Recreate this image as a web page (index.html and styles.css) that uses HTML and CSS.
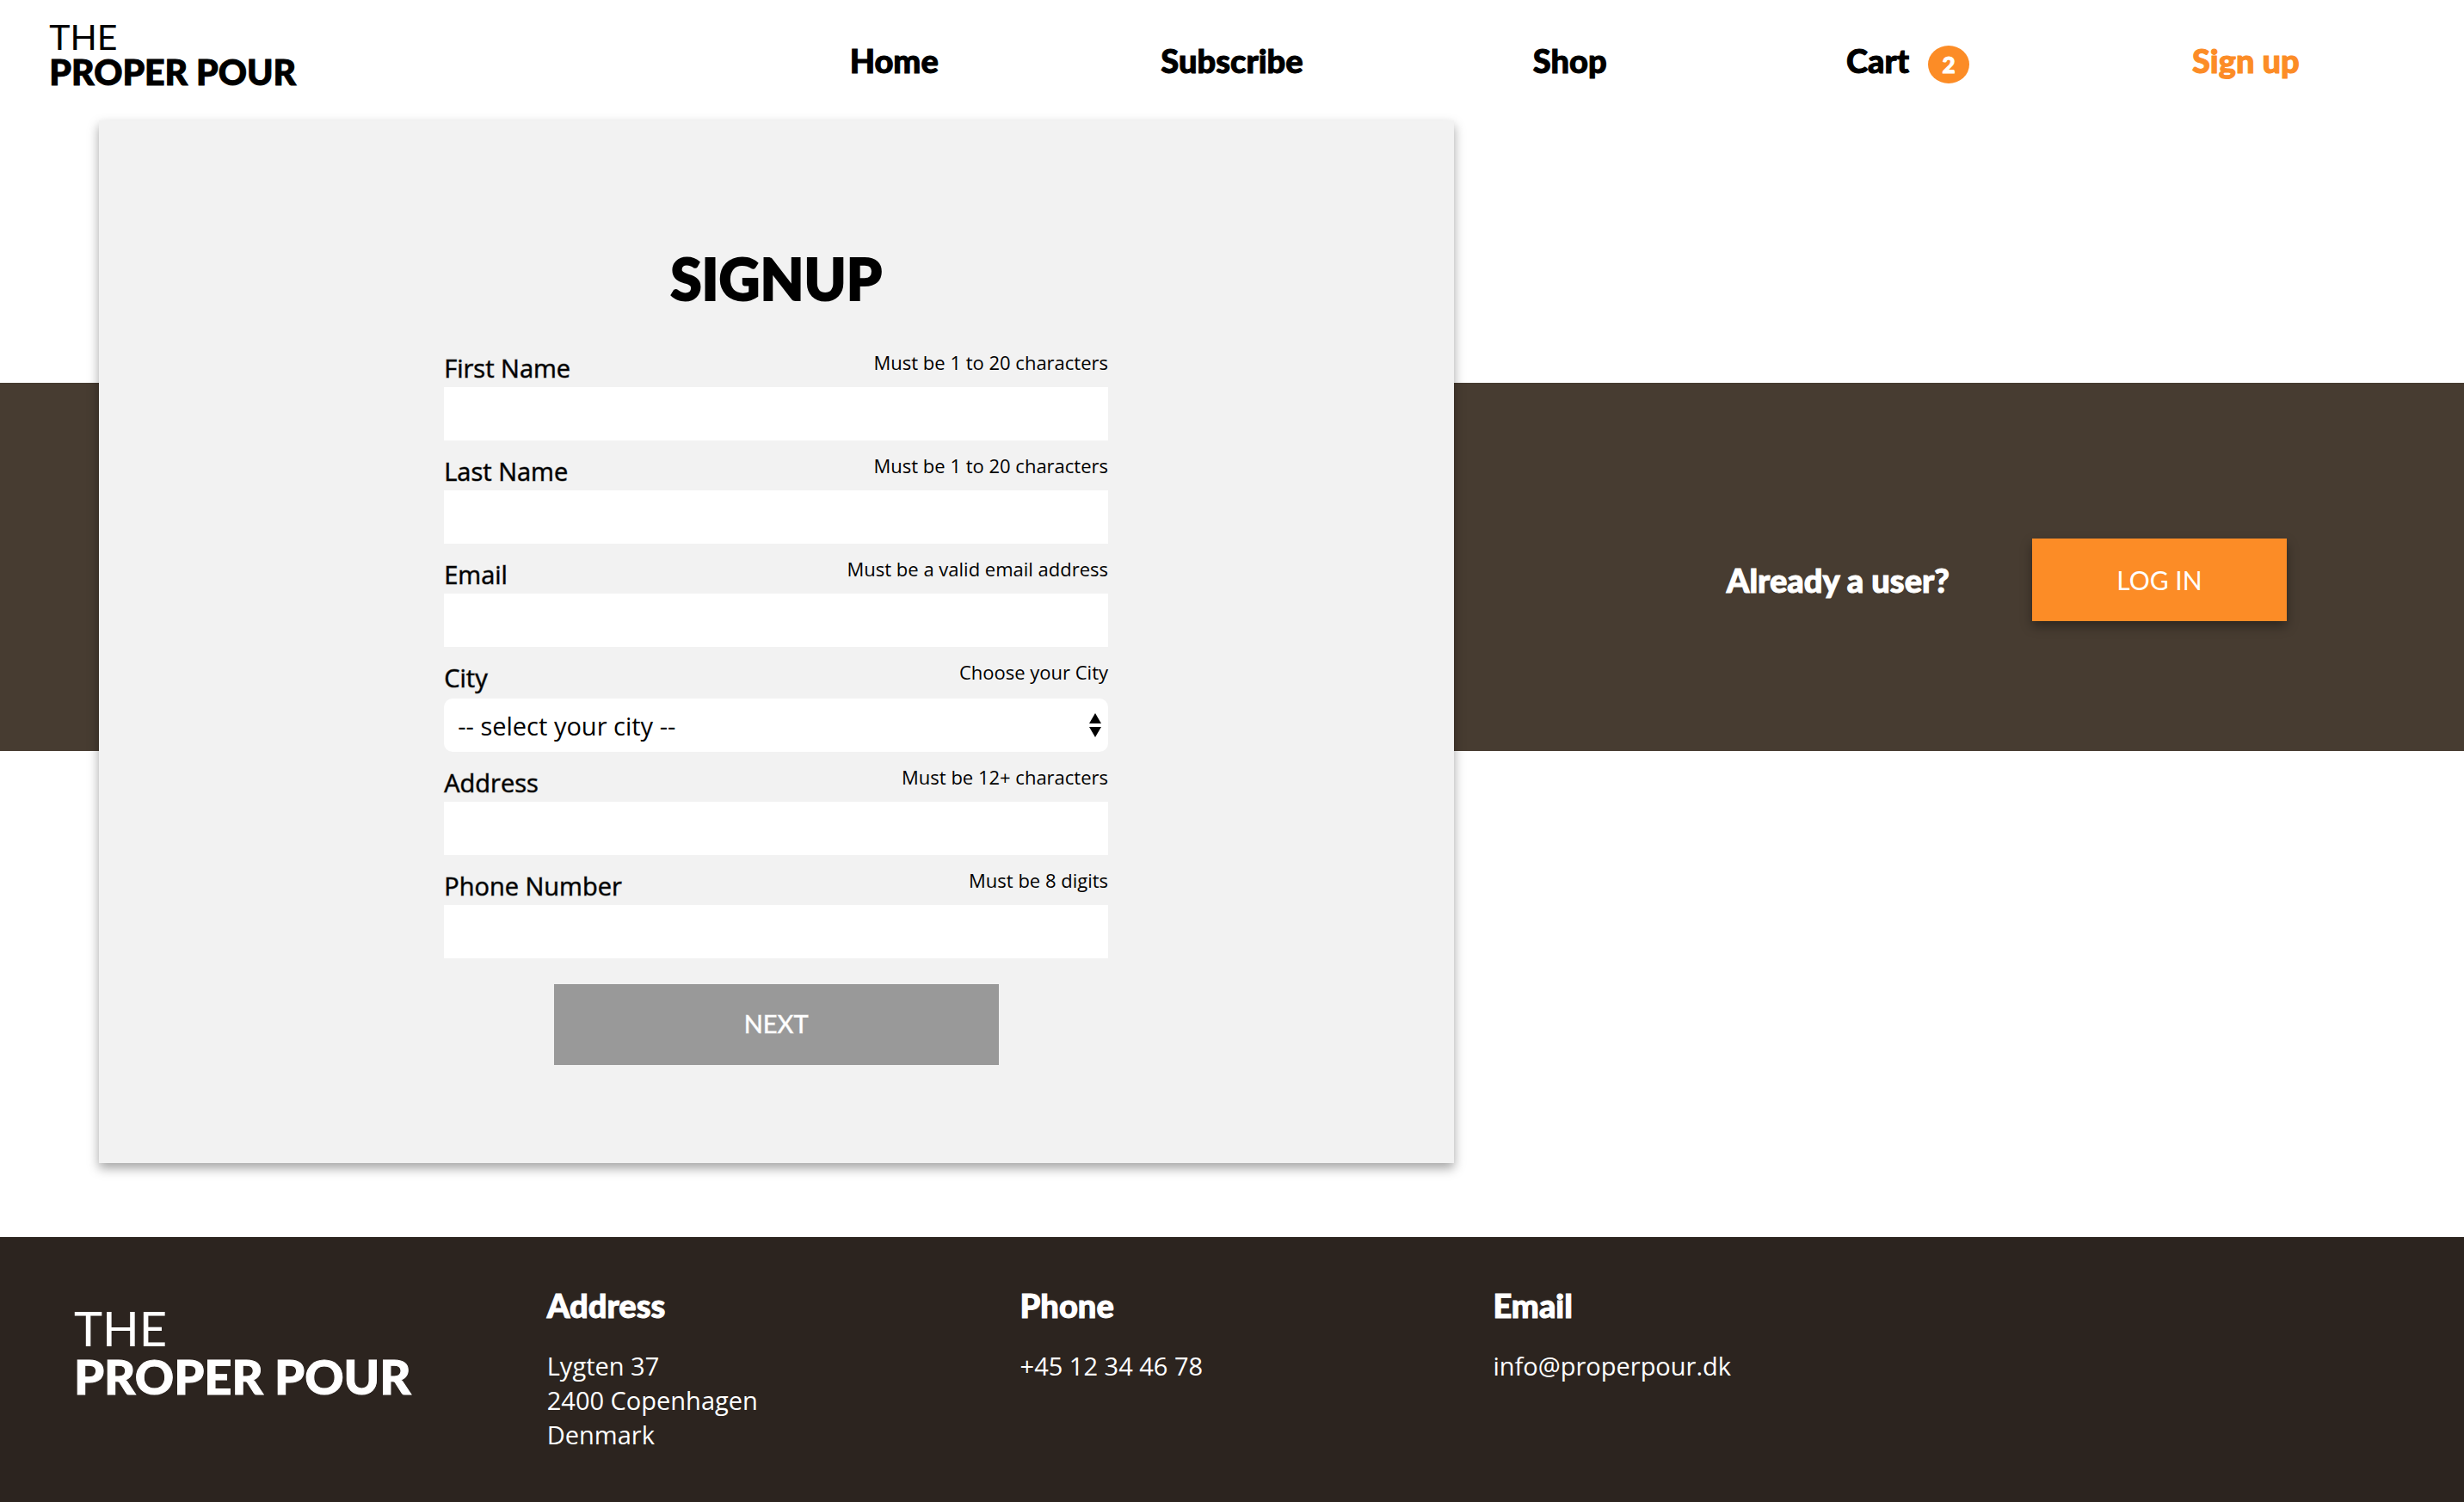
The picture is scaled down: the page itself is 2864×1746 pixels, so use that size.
FILE: index.html
```html
<!DOCTYPE html>
<html lang="en">
<head>
  <meta charset="utf-8">
  <meta name="viewport" content="width=device-width, initial-scale=1">
  <title>The Proper Pour – Sign up</title>
  <link rel="stylesheet" href="styles.css">
</head>
<body>
  <header class="header">
    <a class="logo" href="#">THE <strong class="logo-name">PROPER POUR</strong></a>
    <nav class="nav">
      <a class="nav-link" href="#">Home</a>
      <a class="nav-link" href="#">Subscribe</a>
      <a class="nav-link" href="#">Shop</a>
      <a class="nav-link" href="#">Cart <span class="badge">2</span></a>
      <a class="nav-link nav-link-active" href="#">Sign up</a>
    </nav>
  </header>

  <main class="main">
    <section class="band">
      <h2 class="band-title">Already a user?</h2>
      <button class="button button-login" type="button">LOG IN</button>
    </section>

    <section class="card">
      <form class="form">
        <h1 class="form-title">SIGNUP</h1>

        <div class="field">
          <div class="field-head">
            <label class="label" for="first-name">First Name</label>
            <span class="hint" id="first-name-hint">Must be 1 to 20 characters</span>
          </div>
          <input class="input" id="first-name" type="text" aria-describedby="first-name-hint">
        </div>

        <div class="field">
          <div class="field-head">
            <label class="label" for="last-name">Last Name</label>
            <span class="hint" id="last-name-hint">Must be 1 to 20 characters</span>
          </div>
          <input class="input" id="last-name" type="text" aria-describedby="last-name-hint">
        </div>

        <div class="field">
          <div class="field-head">
            <label class="label" for="email">Email</label>
            <span class="hint" id="email-hint">Must be a valid email address</span>
          </div>
          <input class="input" id="email" type="email" aria-describedby="email-hint">
        </div>

        <div class="field">
          <div class="field-head">
            <label class="label" for="city">City</label>
            <span class="hint" id="city-hint">Choose your City</span>
          </div>
          <div class="select-wrap">
            <select class="input select" id="city" aria-describedby="city-hint">
              <option>-- select your city --</option>
            </select>
            <svg class="select-arrows" width="14" height="28" viewBox="0 0 14 28" aria-hidden="true">
              <path d="M7 0 14 12H0ZM0 16H14L7 28Z"/>
            </svg>
          </div>
        </div>

        <div class="field">
          <div class="field-head">
            <label class="label" for="address">Address</label>
            <span class="hint" id="address-hint">Must be 12+ characters</span>
          </div>
          <input class="input" id="address" type="text" aria-describedby="address-hint">
        </div>

        <div class="field">
          <div class="field-head">
            <label class="label" for="phone">Phone Number</label>
            <span class="hint" id="phone-hint">Must be 8 digits</span>
          </div>
          <input class="input" id="phone" type="tel" aria-describedby="phone-hint">
        </div>

        <button class="button button-next" type="button" disabled>NEXT</button>
      </form>
    </section>
  </main>

  <footer class="footer">
    <a class="logo logo-large" href="#">THE <strong class="logo-name">PROPER POUR</strong></a>
    <div>
      <h3 class="footer-title">Address</h3>
      <address class="footer-text">Lygten 37<br>2400 Copenhagen<br>Denmark</address>
    </div>
    <div>
      <h3 class="footer-title">Phone</h3>
      <p class="footer-text">+45 12 34 46 78</p>
    </div>
    <div>
      <h3 class="footer-title">Email</h3>
      <a class="footer-text" href="mailto:info@properpour.dk">info@properpour.dk</a>
    </div>
  </footer>
</body>
</html>
```
FILE: styles.css
```css
* {
  box-sizing: border-box;
}

body {
  display: flex;
  flex-direction: column;
  min-height: 100vh;
  margin: 0;
  background: #fff;
  color: #000;
  font-family: "Open Sans", sans-serif;
}

h1,
h2,
h3,
p {
  margin: 0;
}

a {
  color: inherit;
  text-decoration: none;
}

/* Extra weight for the heavy display text */
.logo-name,
.nav-link,
.band-title,
.form-title,
.footer-title {
  -webkit-text-stroke: 1px currentColor;
}

/* Header */
.header {
  display: grid;
  grid-template-columns: 2fr 5fr;
  align-items: center;
  min-height: 140px;
  padding: 0 2%;
}

.logo {
  margin-bottom: 14px;
  font: 400 41px/41px Lato, sans-serif;
}

.logo-name {
  display: block;
  font-weight: 900;
}

.nav {
  display: grid;
  grid-template-columns: repeat(5, 1fr);
  align-items: baseline;
  padding-top: 4px;
}

.nav-link {
  display: flex;
  align-items: baseline;
  justify-content: center;
  gap: 22px;
  font: 900 38px/46px Lato, sans-serif;
}

.nav-link-active {
  color: #fc8c26;
}

.badge {
  width: 48px;
  border-radius: 50%;
  background: #fc8c26;
  color: #fff;
  font-size: 26px;
  line-height: 44px;
  text-align: center;
}

/* The card spans all three rows, the band only the middle one */
.main {
  display: grid;
  grid-template-columns: 4% 55% 1fr;
  grid-template-rows: 305px 428px auto;
  padding-bottom: 86px;
}

.band {
  grid-area: 2 / 1 / 3 / -1;
  display: flex;
  align-items: center;
  justify-content: flex-end;
  gap: 96px;
  padding: 30px 206px 0 0;
  background: #473c31;
}

.band-title {
  color: #fff;
  font: 900 38px/46px Lato, sans-serif;
}

.card {
  grid-area: 1 / 2 / 4 / 3;
  padding: 144px 0 114px;
  background: #f2f2f2;
  box-shadow: 0 6px 12px rgba(0, 0, 0, 0.36);
}

/* Form */
.form {
  display: flex;
  flex-direction: column;
  gap: 14px;
  width: 49%;
  margin: 0 auto;
}

.form-title {
  margin-bottom: 28px;
  font: 900 66px/80px Lato, sans-serif;
  text-align: center;
  -webkit-text-stroke-width: 2px;
}

.field-head {
  display: flex;
  align-items: flex-start;
  justify-content: space-between;
}

.label {
  font-size: 29px;
  line-height: 44px;
  -webkit-text-stroke: 1px rgba(0, 0, 0, 0.5);
}

.hint {
  font-size: 22px;
  line-height: 30px;
}

.input {
  display: block;
  width: 100%;
  height: 62px;
  padding: 0 16px;
  border: 0;
  border-radius: 0;
  background: #fff;
  color: #000;
  font: 29px "Open Sans", sans-serif;
}

.select-wrap {
  display: grid;
  align-items: center;
  padding-top: 2px;
}

.select {
  grid-area: 1 / 1;
  border-radius: 10px;
  appearance: none;
}

.select-arrows {
  grid-area: 1 / 1;
  justify-self: end;
  margin-right: 8px;
  pointer-events: none;
}

.button {
  border: 0;
  color: #fff;
  font-family: Lato, sans-serif;
}

.button-login {
  width: 296px;
  height: 96px;
  background: #fc8c26;
  box-shadow: 0 6px 12px rgba(0, 0, 0, 0.36);
  font-size: 30px;
}

.button-next {
  align-self: center;
  width: 67%;
  height: 94px;
  margin-top: 16px;
  padding-bottom: 4px;
  background: #999;
  font-size: 29px;
  -webkit-text-stroke: 1px rgba(255, 255, 255, 0.5);
}

/* Footer */
.footer {
  flex: 1;
  display: grid;
  grid-template-columns: repeat(5, 1fr);
  align-items: start;
  gap: 57px;
  padding: 56px 3%;
  background: #2c241f;
  color: #fff;
}

.logo-large {
  margin: 22px 0 0;
  font-size: 56px;
  line-height: 56px;
}

.footer-title {
  margin-bottom: 28px;
  font: 900 38px/46px Lato, sans-serif;
}

.footer-text {
  font-size: 29px;
  font-style: normal;
  line-height: 40px;
}
```
